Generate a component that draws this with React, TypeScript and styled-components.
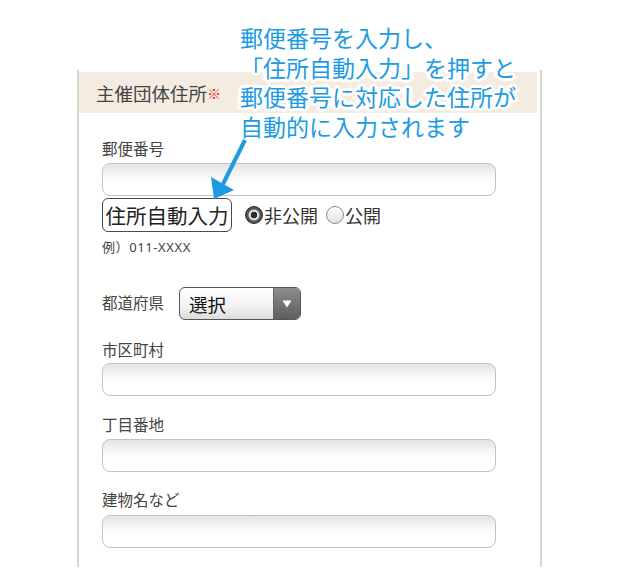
import React from 'react';
import styled, { createGlobalStyle } from 'styled-components';

const GlobalStyle = createGlobalStyle`
  html, body {
    margin: 0;
    padding: 0;
    background: #ffffff;
  }
  body {
    font-family: "Noto Sans CJK JP", "Noto Sans", sans-serif;
    color: #3a3a3a;
  }
`;

const Screen = styled.div`
  position: relative;
  width: 620px;
  height: 581px;
  overflow: hidden;
  background: #ffffff;
`;

const Frame = styled.div`
  box-sizing: border-box;
  margin: 70px 0 0 77px;
  width: 465px;
  height: 497px;
  padding-top: 2px;
  border-left: 2px solid #dcd5ca;
  border-right: 2px solid #dcd5ca;
`;

const SectionHead = styled.div`
  height: 41px;
  margin-right: 3px;
  padding-left: 17px;
  display: flex;
  align-items: center;
  background: #f4ece1;
  font-size: 18.5px;
  color: #444;
`;

const Required = styled.span`
  color: #e8202a;
  font-size: 14px;
`;

const Body = styled.div`
  padding-left: 23px;
  display: flex;
  flex-direction: column;
`;

const Label = styled.div<{ top: number }>`
  margin-top: ${p => p.top}px;
  height: 20px;
  line-height: 20px;
  font-size: 15.5px;
  color: #444;
`;

const TextInput = styled.div<{ gap: number }>`
  box-sizing: border-box;
  margin-top: ${p => p.gap}px;
  width: 394px;
  height: 33px;
  border: 1px solid #c2c2c2;
  border-radius: 8px;
  background: linear-gradient(to bottom, #e3e3e3 0%, #f4f4f4 30%, #ffffff 60%);
`;

const ActionRow = styled.div`
  margin-top: 2px;
  display: flex;
  align-items: center;
  height: 34px;
`;

const AutoButton = styled.div`
  box-sizing: border-box;
  width: 130px;
  height: 34px;
  border: 1.5px solid #4a4a4a;
  border-radius: 6px;
  display: flex;
  align-items: center;
  justify-content: center;
  font-size: 20.5px;
  color: #222;
  background: #fff;
`;

const RadioGroup = styled.div`
  display: flex;
  align-items: center;
  margin-left: 13px;
  font-size: 18px;
  color: #333;
`;

const RadioDot = styled.span<{ checked?: boolean }>`
  box-sizing: border-box;
  width: 18px;
  height: 18px;
  border-radius: 50%;
  border: 1px solid ${p => (p.checked ? '#2e2e2e' : '#8a8a8a')};
  background: ${p =>
    p.checked
      ? 'radial-gradient(circle, #2a2a2a 0 3px, #d8d8d8 3.5px 5px, #555 6px, #444 100%)'
      : 'linear-gradient(to bottom, #ffffff 0%, #e2e2e2 100%)'};
  margin-right: 1px;
`;

const RadioText = styled.span`
  margin-right: 8px;
`;

const Example = styled.div`
  margin-top: 7px;
  height: 16px;
  line-height: 16px;
  font-family: "Noto Sans", "Noto Sans CJK JP", sans-serif;
  font-size: 13px;
  letter-spacing: 0.6px;
  color: #444;
`;

const PrefRow = styled.div`
  margin-top: 32px;
  display: flex;
  align-items: center;
`;

const PrefLabel = styled.span`
  width: 77px;
  margin-top: -3px;
  font-size: 15.5px;
  color: #444;
`;

const Select = styled.div`
  box-sizing: border-box;
  width: 122px;
  height: 33px;
  border: 1px solid #555;
  border-radius: 6px;
  display: flex;
  overflow: hidden;
  background: linear-gradient(to bottom, #ffffff 0%, #f2f2f2 60%, #dcdcdc 100%);
`;

const SelectValue = styled.span`
  flex: 1;
  padding-left: 9px;
  display: flex;
  align-items: center;
  font-size: 18.5px;
  color: #111;
`;

const SelectHandle = styled.span`
  width: 26px;
  display: flex;
  align-items: center;
  justify-content: center;
  border-left: 1px solid #666;
  background: linear-gradient(to bottom, #8c8c8c 0%, #5e5e5e 100%);
`;

const Callout = styled.div`
  position: absolute;
  left: 240px;
  top: 25px;
  font-family: "Liberation Sans", "Noto Sans CJK JP", sans-serif;
  font-size: 23px;
  line-height: 29.5px;
  color: #1d9be2;
  white-space: nowrap;
  text-shadow:
    0 0 3px #fff, 3px 0 0 #fff, -3px 0 0 #fff, 0 3px 0 #fff, 0 -3px 0 #fff,
    2px 2px 0 #fff, -2px -2px 0 #fff, 2px -2px 0 #fff, -2px 2px 0 #fff,
    4px 1px 2px #fff, -4px 1px 2px #fff;
`;

const CalloutLine = styled.div`
  height: 29.5px;
`;

const Pointer = styled.svg`
  position: absolute;
  left: 0;
  top: 0;
`;

const textFields = [
  { label: '市区町村', top: 19, gap: 4 },
  { label: '丁目番地', top: 18, gap: 5 },
  { label: '建物名など', top: 17, gap: 6 },
];

const calloutLines = [
  '郵便番号を入力し、',
  '「住所自動入力」を押すと',
  '郵便番号に対応した住所が',
  '自動的に入力されます',
];

export default function App() {
  return (
    <Screen>
      <GlobalStyle />
      <Frame>
        <SectionHead>
          主催団体住所<Required>※</Required>
        </SectionHead>
        <Body>
          <Label top={25}>郵便番号</Label>
          <TextInput gap={5} />
          <ActionRow>
            <AutoButton>住所自動入力</AutoButton>
            <RadioGroup>
              <RadioDot checked />
              <RadioText>非公開</RadioText>
              <RadioDot />
              <RadioText>公開</RadioText>
            </RadioGroup>
          </ActionRow>
          <Example>例）011-XXXX</Example>
          <PrefRow>
            <PrefLabel>都道府県</PrefLabel>
            <Select>
              <SelectValue>選択</SelectValue>
              <SelectHandle>
                <svg width="10" height="8" viewBox="0 0 10 8">
                  <path d="M0.5 0.5 L9.5 0.5 L5 7.5 Z" fill="#fff" />
                </svg>
              </SelectHandle>
            </Select>
          </PrefRow>
          {textFields.map(f => (
            <React.Fragment key={f.label}>
              <Label top={f.top}>{f.label}</Label>
              <TextInput gap={f.gap} />
            </React.Fragment>
          ))}
        </Body>
      </Frame>

      <Callout>
        {calloutLines.map(line => (
          <CalloutLine key={line}>{line}</CalloutLine>
        ))}
      </Callout>

      <Pointer width="620" height="581" viewBox="0 0 620 581">
        <line x1="245" y1="140" x2="223" y2="184" stroke="#1d9be2" strokeWidth="4" />
        <path d="M211 177 L234 190 L214 199 Z" fill="#1d9be2" />
      </Pointer>
    </Screen>
  );
}
